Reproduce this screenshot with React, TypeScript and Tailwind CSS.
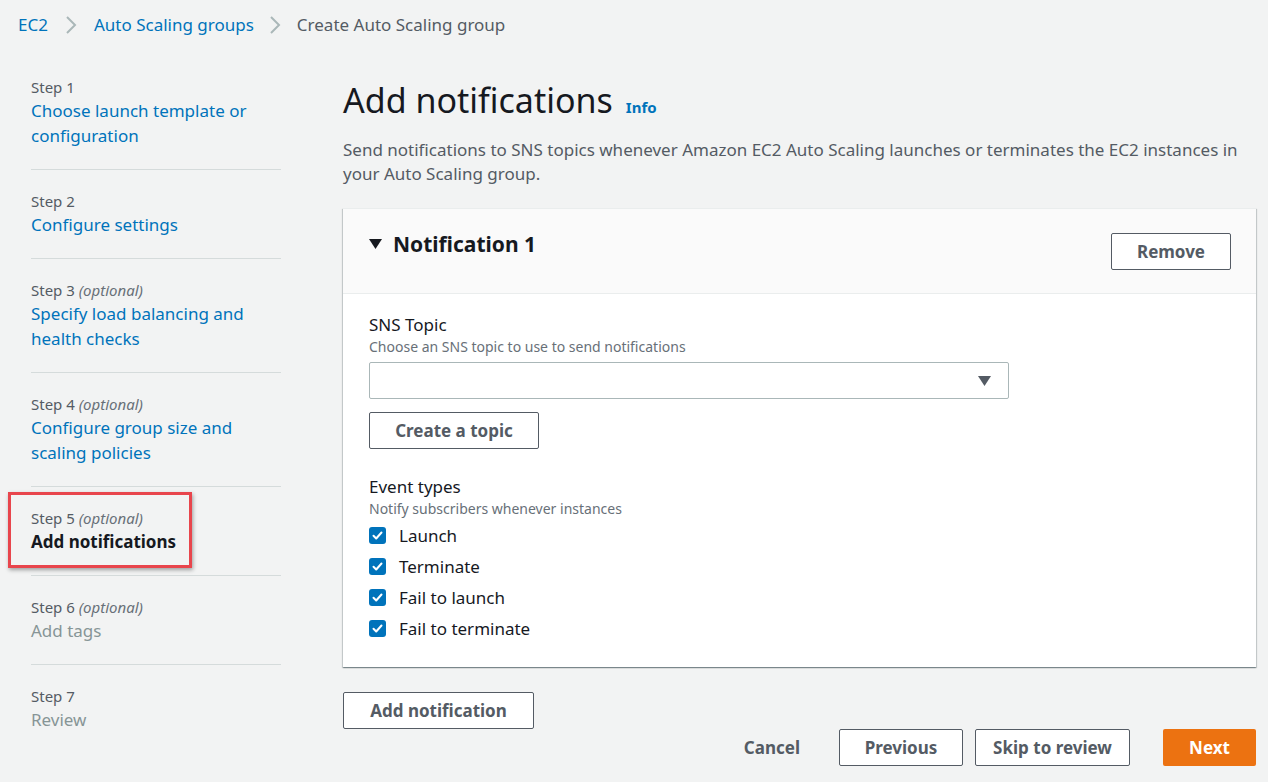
import React from "react";

interface Step {
  label: string;
  optional?: boolean;
  title: string[];
  state: "done" | "current" | "todo";
}

const steps: Step[] = [
  { label: "Step 1", title: ["Choose launch template or", "configuration"], state: "done" },
  { label: "Step 2", title: ["Configure settings"], state: "done" },
  { label: "Step 3", optional: true, title: ["Specify load balancing and", "health checks"], state: "done" },
  { label: "Step 4", optional: true, title: ["Configure group size and", "scaling policies"], state: "done" },
  { label: "Step 5", optional: true, title: ["Add notifications"], state: "current" },
  { label: "Step 6", optional: true, title: ["Add tags"], state: "todo" },
  { label: "Step 7", title: ["Review"], state: "todo" },
];

const events = ["Launch", "Terminate", "Fail to launch", "Fail to terminate"];

const Chevron = ({ className }: { className: string }) => (
  <svg width="12" height="20" viewBox="0 0 12 20" className={"shrink-0 " + className}>
    <polyline points="2,2 10,10 2,18" fill="none" stroke="#aab7b8" strokeWidth="2" />
  </svg>
);

const Caret = ({ color }: { color: string }) => (
  <svg width="13" height="10" viewBox="0 0 13 10">
    <polygon points="0,0 13,0 6.5,10" fill={color} />
  </svg>
);

const Checkbox = () => (
  <span className="w-[17px] h-[17px] rounded-[3px] bg-[#0073bb] flex items-center justify-center shrink-0">
    <svg width="13" height="13" viewBox="0 0 13 13">
      <polyline points="2.5,6.8 5.2,9.5 10.5,3.5" fill="none" stroke="white" strokeWidth="2" strokeLinecap="round" strokeLinejoin="round" />
    </svg>
  </span>
);

const Button: React.FC<{ children: React.ReactNode; className?: string }> = ({ children, className }) => (
  <button
    className={
      "h-[37px] border border-[#545b64] rounded-[2px] bg-white text-[#545b64] text-[17px] font-bold flex items-center justify-center " +
      (className ?? "")
    }
  >
    {children}
  </button>
);

export default function App() {
  return (
    <div className="min-h-screen bg-[#f2f3f3] font-['Noto_Sans',sans-serif] text-[#16191f] pr-[12px]">
      {/* breadcrumbs */}
      <nav className="flex items-center pl-[18px] pt-[13px] h-[37px] text-[17px] leading-[24px]">
        <span className="text-[#0073bb]">EC2</span>
        <Chevron className="mx-[17px]" />
        <span className="text-[#0073bb]">Auto Scaling groups</span>
        <Chevron className="ml-[15px] mr-[16px]" />
        <span className="text-[#545b64]">Create Auto Scaling group</span>
      </nav>

      <div className="flex mt-[41px]">
        {/* wizard steps */}
        <ol className="w-[250px] ml-[31px] mr-[62px] -mt-px shrink-0">
          {steps.map((step, i) => (
            <li
              key={step.label}
              className={
                "relative pb-[21px] " + (i > 0 ? "border-t border-[#d5dbdb] pt-[21px]" : "")
              }
            >
              {step.state === "current" && (
                <div className="absolute left-[-23px] top-[5px] w-[184px] h-[76px] border-[3px] border-[#e8454c] shadow-[1px_2px_4px_rgba(0,0,0,0.35)]" />
              )}
              <div className="text-[15px] leading-[21px] text-[#545b64]">
                {step.label}
                {step.optional && <i className="text-[#687078]"> (optional)</i>}
              </div>
              <div
                className={
                  "text-[17px] leading-[25px] " +
                  (step.state === "done"
                    ? "text-[#0073bb]"
                    : step.state === "current"
                    ? "font-bold text-[#16191f]"
                    : "text-[#879596]")
                }
              >
                {step.title.map((t) => (
                  <div key={t}>{t}</div>
                ))}
              </div>
            </li>
          ))}
        </ol>

        {/* main content */}
        <main className="flex-1">
          <div className="flex items-baseline gap-[13px]">
            <h1 className="text-[34px] leading-[44px] font-normal">Add notifications</h1>
            <span className="text-[15px] font-bold text-[#0073bb]">Info</span>
          </div>
          <p className="mt-[16px] text-[17px] leading-[24px] text-[#545b64]">
            Send notifications to SNS topics whenever Amazon EC2 Auto Scaling launches or terminates the EC2 instances in
            your Auto Scaling group.
          </p>

          <section className="mt-[22px] bg-white border-t border-[#eaeded] shadow-[0_1px_1px_0_rgba(0,28,36,0.3),1px_1px_1px_0_rgba(0,28,36,0.15),-1px_1px_1px_0_rgba(0,28,36,0.15)]">
            <header className="h-[85px] bg-[#fafafa] border-b border-[#eaeded] flex items-start justify-between pl-[26px] pr-[25px] pt-[20px]">
              <div className="flex items-center gap-[11px]">
                <Caret color="#16191f" />
                <h2 className="text-[21px] leading-[30px] font-bold">Notification 1</h2>
              </div>
              <Button className="w-[120px] h-[36px] mt-[4px]">Remove</Button>
            </header>

            <div className="pl-[26px] pt-[19px] pb-[23px]">
              <div className="text-[17px] leading-[24px]">SNS Topic</div>
              <div className="text-[14px] leading-[20px] text-[#687078]">Choose an SNS topic to use to send notifications</div>
              <div className="mt-[5px] w-[640px] h-[37px] border border-[#aab7b8] rounded-[2px] bg-white flex items-center justify-end pr-[17px]">
                <Caret color="#545b64" />
              </div>
              <Button className="w-[170px] mt-[13px]">Create a topic</Button>

              <div className="mt-[26px] text-[17px] leading-[24px]">Event types</div>
              <div className="text-[14px] leading-[20px] text-[#687078]">Notify subscribers whenever instances</div>
              <div className="mt-[1px]">
                {events.map((e) => (
                  <label key={e} className="h-[31px] flex items-center gap-[13px] text-[17px]">
                    <Checkbox />
                    {e}
                  </label>
                ))}
              </div>
            </div>
          </section>

          <Button className="w-[191px] h-[37px] mt-[25px]">Add notification</Button>

          <div className="flex items-center justify-end">
            <span className="text-[17px] font-bold text-[#545b64] mr-[39px]">Cancel</span>
            <Button className="w-[124px]">Previous</Button>
            <Button className="w-[155px] ml-[12px]">Skip to review</Button>
            <button className="w-[93px] h-[37px] ml-[33px] rounded-[2px] bg-[#ec7211] text-white text-[17px] font-bold">
              Next
            </button>
          </div>
        </main>
      </div>
    </div>
  );
}
